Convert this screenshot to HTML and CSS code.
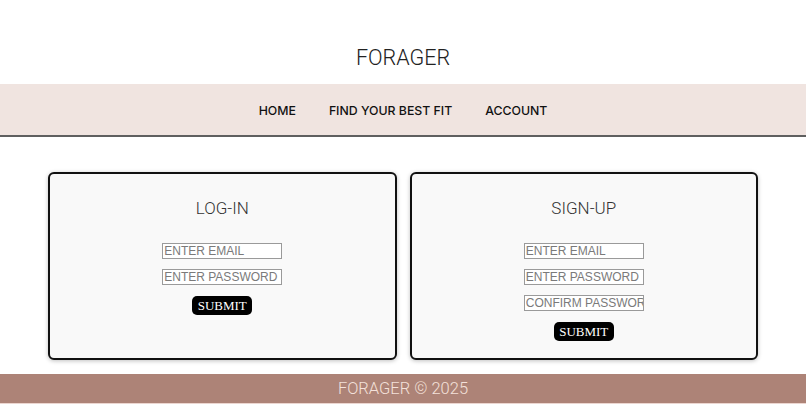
FILE: index.html
```html
<!DOCTYPE html>
<html lang="en">
<head>
<meta charset="utf-8">
<title>Forager</title>
<link rel="stylesheet" href="styles.css">
</head>
<body>
<header class="site-header">
  <h1 class="brand">FORAGER</h1>
  <nav class="nav">
    <a class="nav-link" href="#">HOME</a>
    <a class="nav-link" href="#">FIND YOUR BEST FIT</a>
    <a class="nav-link" href="#">ACCOUNT</a>
  </nav>
</header>
<main class="panels">
  <section class="card">
    <h2 class="card-title">LOG-IN</h2>
    <form class="form">
      <input class="field" type="text" placeholder="ENTER EMAIL">
      <input class="field" type="password" placeholder="ENTER PASSWORD">
      <button class="submit" type="button">SUBMIT</button>
    </form>
  </section>
  <section class="card">
    <h2 class="card-title">SIGN-UP</h2>
    <form class="form">
      <input class="field" type="text" placeholder="ENTER EMAIL">
      <input class="field" type="password" placeholder="ENTER PASSWORD">
      <input class="field" type="password" placeholder="CONFIRM PASSWORD">
      <button class="submit" type="button">SUBMIT</button>
    </form>
  </section>
</main>
<footer class="footer">FORAGER © 2025</footer>
</body>
</html>
```
FILE: styles.css
```css
* { box-sizing: border-box; }
html, body { margin: 0; padding: 0; background: #ffffff; }
body { font-family: Roboto, "Liberation Sans", sans-serif; color: #1a1a1a; }

.site-header { display: flex; flex-direction: column; }
.brand {
  margin: 0;
  height: 84px;
  padding-top: 44px;
  text-align: center;
  font-size: 21.5px;
  line-height: 28px;
  font-weight: 300;
  color: #222;
}
.nav {
  height: 53px;
  background: #f0e4e0;
  border-bottom: 2px solid #5f5f5f;
  display: flex;
  justify-content: center;
  align-items: center;
  gap: 33px;
  padding-top: 1px;
}
.nav-link {
  font-family: Inter, Roboto, sans-serif;
  font-size: 12.3px;
  font-weight: 500;
  color: #111;
  text-decoration: none;
}

.panels {
  display: grid;
  grid-template-columns: 1fr 1fr;
  gap: 13px;
  padding: 35px 48px 0;
}
.card {
  height: 188px;
  background: #f9f9f9;
  border: 2px solid #111;
  border-radius: 6px;
  box-shadow: 0 1px 4px rgba(0,0,0,0.25);
  display: flex;
  flex-direction: column;
  align-items: center;
  padding-top: 23px;
}
.card-title {
  margin: 0;
  font-size: 17px;
  line-height: 22px;
  font-weight: 300;
  color: #333;
}
.form {
  margin-top: 24px;
  display: flex;
  flex-direction: column;
  align-items: center;
  gap: 10px;
}
.field {
  width: 120px;
  height: 16px;
  margin: 0;
  padding: 0 0 0 1px;
  border: 1px solid #9a9a9a;
  background: #fff;
  font-family: "Liberation Sans", Arial, sans-serif;
  font-size: 12px;
  line-height: 14px;
  color: #333;
}
.field::placeholder { color: #7a7a7a; opacity: 1; }
.submit {
  margin-top: 1px;
  width: 60px;
  height: 19px;
  padding: 0;
  border: none;
  border-radius: 5px;
  background: #000;
  color: #fff;
  font-family: "Liberation Serif", "Times New Roman", serif;
  font-size: 13px;
  line-height: 19px;
}

.footer {
  margin-top: 14px;
  height: 30px;
  background: #ad8377;
  border-bottom: 1px solid #ecd6d0;
  color: #f4e1da;
  text-align: center;
  font-size: 16.5px;
  font-weight: 300;
  line-height: 30px;
}
```
